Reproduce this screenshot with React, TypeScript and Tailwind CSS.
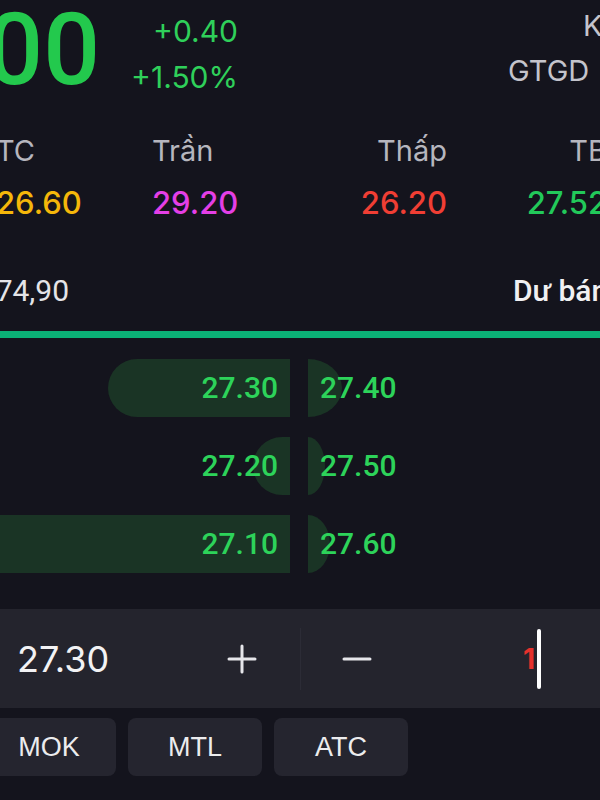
import React from "react";

const rows = [
  { bid: "27.30", ask: "27.40", bidW: 182, askW: 34 },
  { bid: "27.20", ask: "27.50", bidW: 37, askW: 17 },
  { bid: "27.10", ask: "27.60", bidW: 330, askW: 22 },
];

function PlusIcon() {
  return (
    <svg width="30" height="30" viewBox="0 0 30 30" fill="none">
      <path d="M15 2v26M2 15h26" stroke="#e6e6ea" strokeWidth="3" strokeLinecap="round" />
    </svg>
  );
}

function MinusIcon() {
  return (
    <svg width="30" height="30" viewBox="0 0 30 30" fill="none">
      <path d="M2 15h26" stroke="#e6e6ea" strokeWidth="3" strokeLinecap="round" />
    </svg>
  );
}

export default function App() {
  return (
    <div className="w-[600px] h-[800px] overflow-hidden bg-[#14141d] font-['Inter',sans-serif] flex flex-col">
      {/* Header */}
      <div className="flex h-[136px] shrink-0">
        <div className="w-[100px] shrink-0 flex justify-end">
          <span className="text-[100px] leading-[100px] font-medium text-[#23c94d] font-['Roboto',sans-serif] whitespace-nowrap">
            27.00
          </span>
        </div>
        <div className="w-[138px] shrink-0 flex flex-col items-end pt-[16px] gap-[16px] text-[30px] leading-[30px] text-[#2fd05a]">
          <span>+0.40</span>
          <span>+1.50%</span>
        </div>
        <div className="flex-1 flex flex-col text-[29px] leading-[29px] text-[#c4c4cc] whitespace-nowrap">
          <span className="pl-[345px] pt-[11px]">KLGD</span>
          <span className="pl-[270px] pt-[16px]">GTGD</span>
        </div>
      </div>

      {/* Labels */}
      <div className="flex ml-[-4px] w-[611px] shrink-0 text-[29px] leading-[29px] text-[#b6b6be] whitespace-nowrap">
        <div className="w-[156px]">TC</div>
        <div className="w-[144px]">Trần</div>
        <div className="w-[151px] text-right">Thấp</div>
        <div className="w-[160px] text-right">TB</div>
      </div>
      <div className="flex ml-[-4px] w-[611px] mt-[23px] shrink-0 text-[31px] leading-[29px] font-medium whitespace-nowrap">
        <div className="w-[156px] text-[#f5b70a]">26.60</div>
        <div className="w-[144px] text-[#e43fe6]">29.20</div>
        <div className="w-[151px] text-right text-[#f03e34]">26.20</div>
        <div className="w-[160px] text-right text-[#22c95a]">27.52</div>
      </div>

      {/* Volume row */}
      <div className="flex mt-[59px] shrink-0 text-[30px] leading-[30px] font-['Roboto',sans-serif] whitespace-nowrap">
        <div className="w-[69px] shrink-0 flex justify-end text-[#e4e4e8]">
          <span>1.274,90</span>
        </div>
        <div className="pl-[444px] text-[#f0f0f2] font-medium">Dư bán</div>
      </div>

      {/* Green line */}
      <div className="mt-[25px] h-[7px] bg-[#0bb277] shrink-0" />

      {/* Order book */}
      <div className="mt-[21px] flex flex-col gap-[20px] shrink-0 font-['Roboto',sans-serif] text-[30px] leading-[30px] font-medium text-[#2dd35a]">
        {rows.map((r) => (
          <div key={r.bid} className="flex h-[58px]">
            <div className="w-[290px] shrink-0 relative flex items-center justify-end pr-[12px]">
              <div
                className="absolute right-0 top-0 bottom-0 rounded-l-full bg-[#1a3425]"
                style={{ width: r.bidW }}
              />
              <span className="relative">{r.bid}</span>
            </div>
            <div className="w-[18px] shrink-0" />
            <div className="flex-1 relative flex items-center pl-[12px]">
              <div
                className="absolute left-0 top-0 bottom-0 rounded-r-[100%_50%] bg-[#1a3425]"
                style={{ width: r.askW }}
              />
              <span className="relative">{r.ask}</span>
            </div>
          </div>
        ))}
      </div>

      {/* Input bar */}
      <div className="mt-[36px] h-[99px] shrink-0 bg-[#24242d] flex items-center">
        <div className="w-[300px] shrink-0 flex items-center pl-[17px] pr-[43px]">
          <span className="text-[36px] leading-[36px] text-[#f2f2f4]">27.30</span>
          <div className="ml-auto flex">
            <PlusIcon />
          </div>
        </div>
        <div className="w-[1px] h-[62px] bg-[#2c2c36] shrink-0" />
        <div className="flex-1 flex items-center pl-[41px]">
          <MinusIcon />
          <div className="ml-[151px] flex items-center">
            <span className="text-[28px] leading-[28px] font-bold text-[#e5312c]">1</span>
            <div className="ml-[2px] w-[4px] h-[60px] rounded-full bg-white" />
          </div>
        </div>
      </div>

      {/* Buttons */}
      <div className="mt-[10px] flex gap-[12px] ml-[-18px] shrink-0 font-['Liberation_Sans',sans-serif] text-[27px] text-[#ececee]">
        {["MOK", "MTL", "ATC"].map((b) => (
          <div
            key={b}
            className="w-[134px] h-[58px] shrink-0 rounded-[8px] bg-[#25252f] flex items-center justify-center"
          >
            {b}
          </div>
        ))}
      </div>
    </div>
  );
}
